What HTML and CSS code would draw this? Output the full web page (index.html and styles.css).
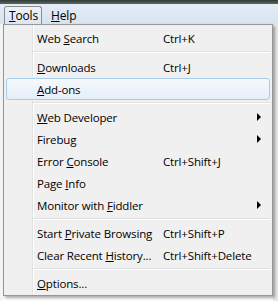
FILE: index.html
```html
<!DOCTYPE html>
<html lang="en">
<head>
  <meta charset="UTF-8" />
  <title>Tools menu</title>
  <link rel="stylesheet" href="styles.css">
</head>
<body>
  <div class="frame"></div>
  <div class="menubar">
    <span class="menubar-item open"><u>T</u>ools</span>
    <span class="menubar-item"><u>H</u>elp</span>
  </div>

  <div class="page">
    <div class="popup">
      <div class="item"><span class="label">Web <u>S</u>earch</span><span class="key">Ctrl+K</span></div>
      <div class="sep first"></div>
      <div class="item"><span class="label"><u>D</u>ownloads</span><span class="key">Ctrl+J</span></div>
      <div class="item hover"><span class="label"><u>A</u>dd-ons</span></div>
      <div class="sep"></div>
      <div class="item"><span class="label"><u>W</u>eb Developer</span><span class="arrow"></span></div>
      <div class="item"><span class="label">Firebug</span><span class="arrow"></span></div>
      <div class="item"><span class="label">Error <u>C</u>onsole</span><span class="key">Ctrl+Shift+J</span></div>
      <div class="item"><span class="label">Page <u>I</u>nfo</span></div>
      <div class="item"><span class="label">Monitor with <u>F</u>iddler</span><span class="arrow"></span></div>
      <div class="sep"></div>
      <div class="item"><span class="label">Start <u>P</u>rivate Browsing</span><span class="key">Ctrl+Shift+P</span></div>
      <div class="item"><span class="label">Clear Recent <u>H</u>istory...</span><span class="key">Ctrl+Shift+Delete</span></div>
      <div class="sep"></div>
      <div class="item"><span class="label"><u>O</u>ptions...</span></div>
    </div>
  </div>
</body>
</html>
```

FILE: styles.css
```css
:root {
  --menu-bg: #f0f0f0;
  --menu-border: #979797;
  --gutter-line: #e2e3e3;
  --text: #000000;
  --hover-border: #a9cbe9;
}

* {
  margin: 0;
  padding: 0;
  box-sizing: border-box;
}

html, body {
  width: 278px;
  height: 301px;
  overflow: hidden;
  background: #ffffff;
  font-family: 'Open Sans', 'Noto Sans', sans-serif;
  font-size: 11.5px;
  letter-spacing: -0.15px;
  color: var(--text);
}

u {
  text-decoration: underline;
  text-underline-offset: 1px;
}

/* kawałek ramki okna nad paskiem menu */
.frame {
  height: 4px;
  background: linear-gradient(#2f3b35, #5d6660);
}

.menubar {
  display: flex;
  align-items: flex-end;
  gap: 4px;
  height: 20px;
  padding-left: 4px;
  background: linear-gradient(#e3ebf6, #d9e4f1);
}

.menubar-item {
  display: flex;
  align-items: center;
  height: 18px;
  padding: 0 4px;
  border: 1px solid transparent;
  border-bottom: none;
  border-radius: 3px 3px 0 0;
  line-height: 1;
  font-size: 12px;
}

.menubar-item.open {
  width: 38px;
  border-color: #8b8f94;
  background: linear-gradient(#eef2f7, #dde5ef);
}

.page {
  background: linear-gradient(to right, #f4f4f4 3px, #ffffff 3px, #ffffff 273px, #e9e9e9 273px);
  height: 277px;
}

.popup {
  width: 270px;
  margin-left: 3px;
  padding: 2px 2px 1px;
  border: 1px solid var(--menu-border);
  background:
    linear-gradient(to right, transparent 28px, var(--gutter-line) 28px, var(--gutter-line) 29px, #ffffff 29px, #ffffff 30px, transparent 30px),
    var(--menu-bg);
  box-shadow: 2px 2px 3px rgba(0, 0, 0, 0.35);
}

.item {
  display: grid;
  grid-template-columns: 126px 1fr 12px;
  align-items: center;
  height: 22px;
  padding-left: 30px;
  border: 1px solid transparent;
  border-radius: 3px;
  white-space: nowrap;
}

.item.hover {
  border-color: var(--hover-border);
  background: linear-gradient(#f5f9fd, #e5eef8);
}

.label {
  grid-column: 1;
}

.key {
  grid-column: 2;
}

.arrow {
  grid-column: 3;
  width: 0;
  height: 0;
  border-left: 4px solid #000000;
  border-top: 4px solid transparent;
  border-bottom: 4px solid transparent;
}

.sep {
  height: 2px;
  margin: 2px 0 2px 27px;
  border-top: 1px solid #e0e0e0;
  border-bottom: 1px solid #ffffff;
}

.sep.first {
  margin-bottom: 3px;
}
```
